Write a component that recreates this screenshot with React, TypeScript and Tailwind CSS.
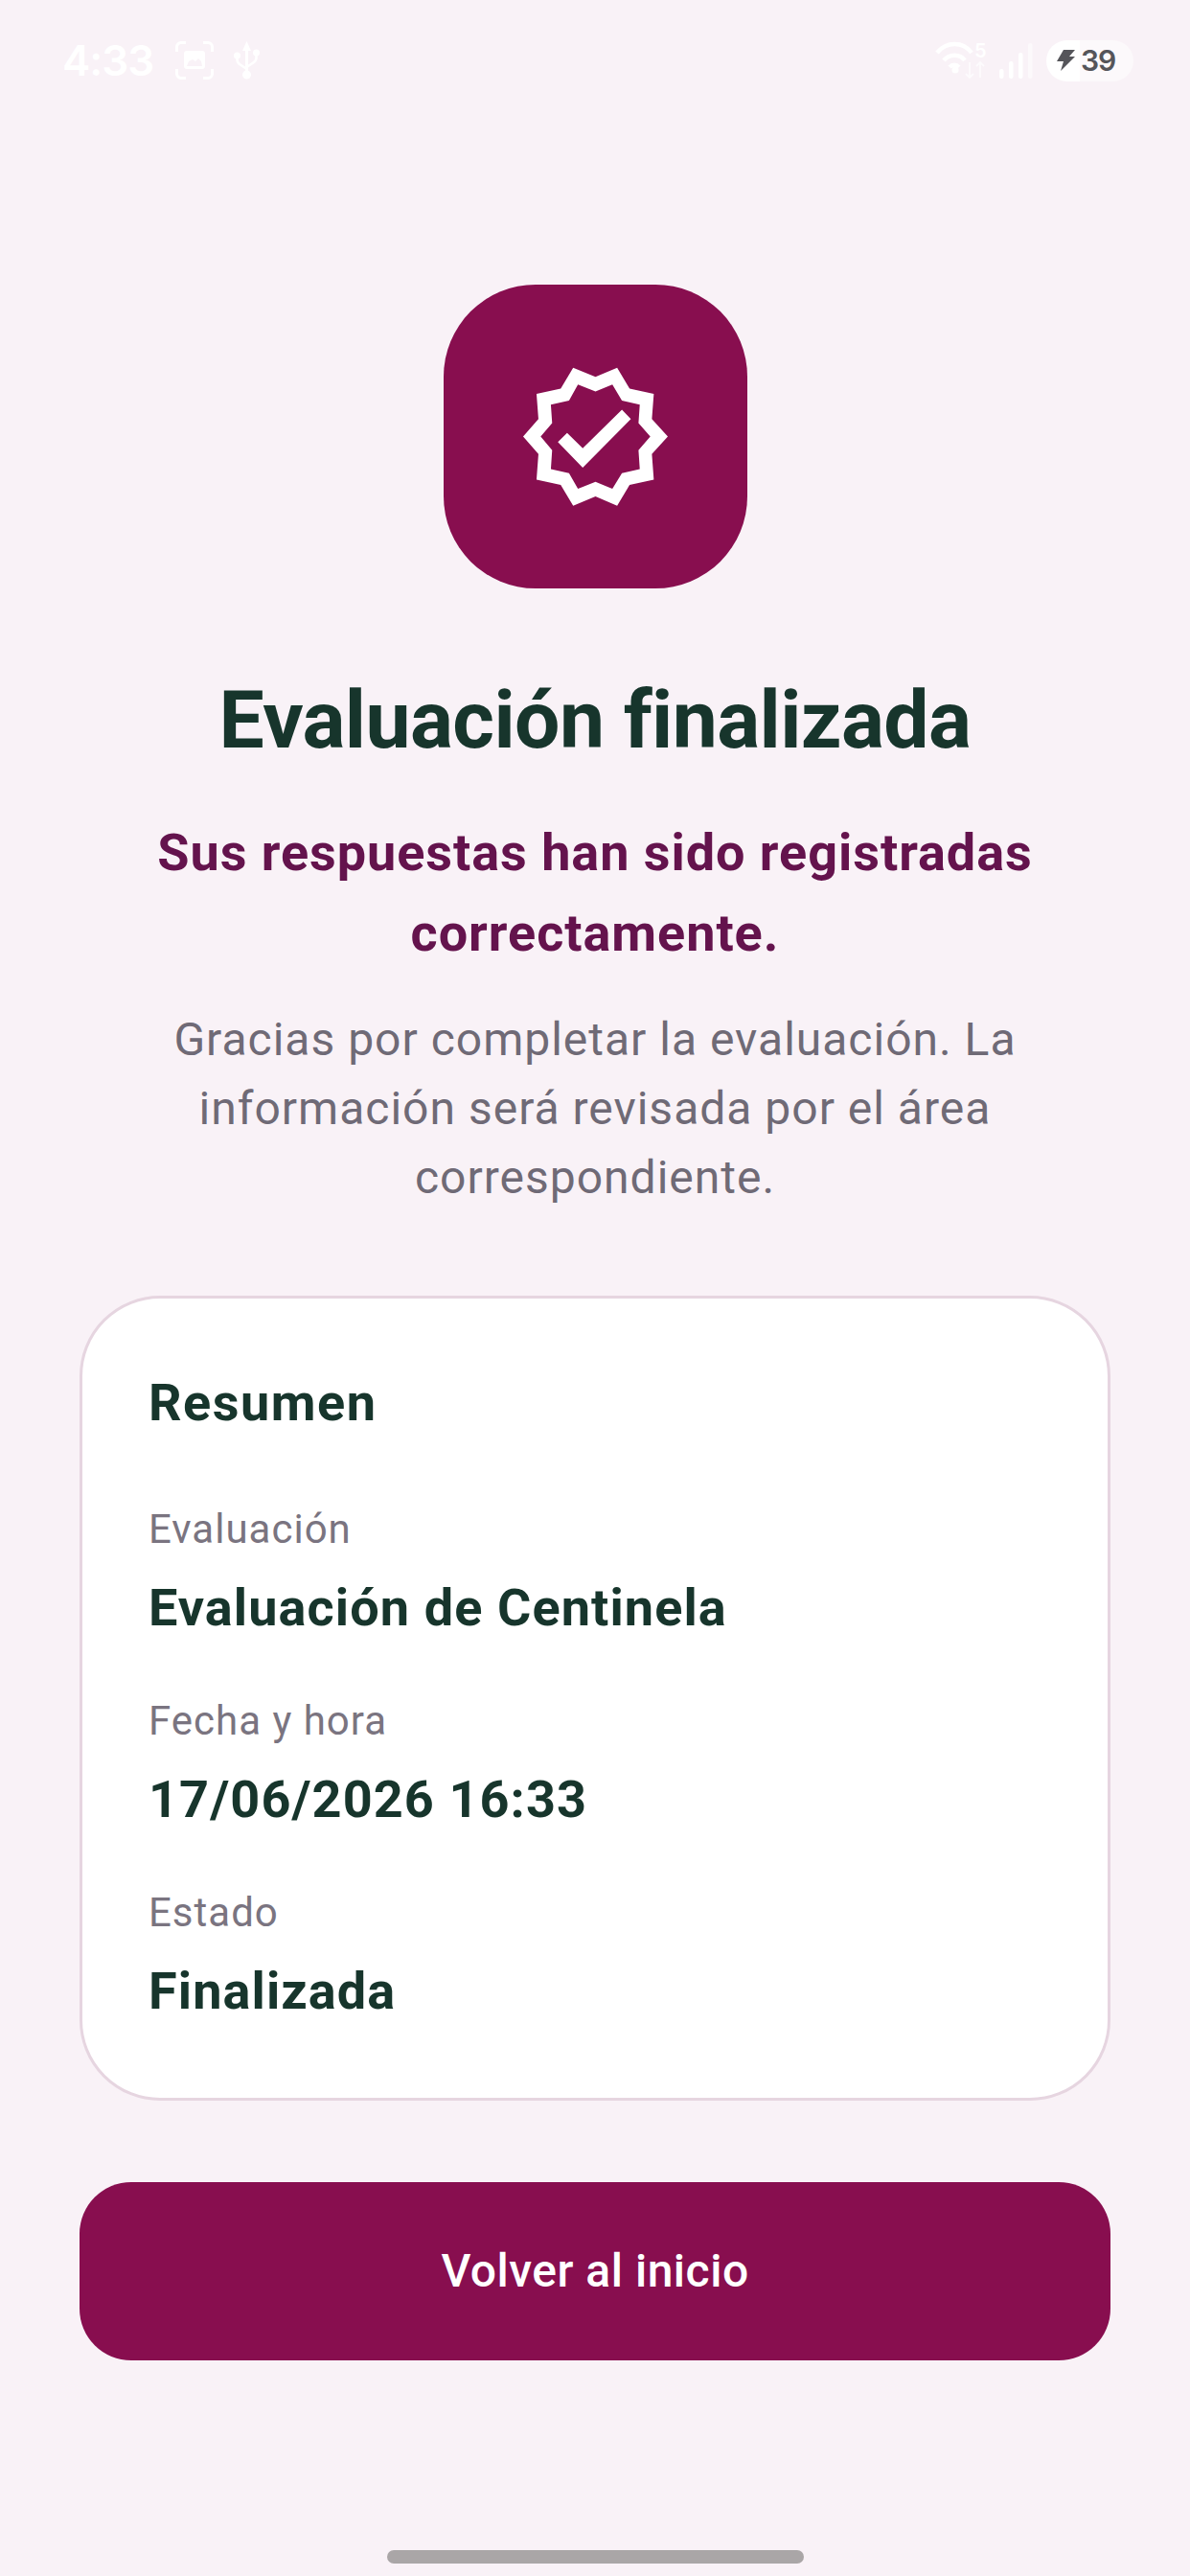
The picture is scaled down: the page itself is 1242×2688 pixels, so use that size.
const font = { fontFamily: "Roboto, sans-serif" };

const StatusBar = () => {
  return (
    <div className="flex h-[86px] items-center justify-between pl-[65px] pr-[59px] pt-[40px]">
      <div className="flex items-center">
        <span className="font-['Inter',sans-serif] text-[44px] leading-[46px] font-semibold tracking-[-1px] text-white">4:33</span>
        <svg className="ml-[23px]" width="40" height="40" viewBox="0 0 40 40" fill="none">
          <path d="M1.5 11V6a4.5 4.5 0 0 1 4.5-4.5h5M29 1.5h5a4.5 4.5 0 0 1 4.5 4.5v5M38.5 29v5a4.5 4.5 0 0 1-4.5 4.5h-5M11 38.5H6A4.5 4.5 0 0 1 1.5 34v-5" stroke="#fff" strokeWidth="3" />
          <path fillRule="evenodd" d="M12 10h16a3 3 0 0 1 3 3v13a3 3 0 0 1-3 3H12a3 3 0 0 1-3-3V13a3 3 0 0 1 3-3Zm0 16h16l-1-5-3-3-3 3-3-2-4 2Z" fill="#fff" />
        </svg>
        <svg className="ml-[21px]" width="27" height="40" viewBox="0 0 27 40" fill="#fff">
          <path d="M13.500 0l4.500 10h-3v24h-3V10H9Z" />
          <circle cx="13.500" cy="35" r="4.500" />
          <circle cx="3.500" cy="15" r="3.500" />
          <circle cx="23.500" cy="12" r="3.500" />
          <path d="M3.500 16v3c0 3 1.500 4.500 4 6l6 4M23.500 13v4c0 3-1.500 4.500-4 6l-6 4" fill="none" stroke="#fff" strokeWidth="2.600" />
        </svg>
      </div>
      <div className="flex items-center">
        <div className="relative h-[40px] w-[53px]">
          <svg width="53" height="40" viewBox="0 0 53 40" fill="#fff">
            <path d="M2 12C12 0 29 0 38 12M9 20c6-7 17-7 22 0M15 27c3-3 7-3 10 0" fill="none" stroke="#fff" strokeWidth="4.500" />
            <circle cx="21" cy="30" r="3.500" />
            <path d="M36 22v16M32 34l4 4 4-4M47 38V22M43 26l4-4 4 4" fill="none" stroke="#fff" strokeWidth="1.800" opacity="0.7" />
          </svg>
          <span className="absolute top-[0px] left-[41px] font-['Inter',sans-serif] text-[20px] leading-[20px] font-semibold text-white">5</span>
        </div>
        <svg className="ml-[14px]" width="35" height="38" viewBox="0 0 35 38" fill="#fff">
          <rect x="0" y="28" width="4.500" height="10" rx="2" />
          <rect x="10" y="20" width="4.500" height="18" rx="2" />
          <rect x="20" y="11" width="4.500" height="27" rx="2" />
          <rect x="30" y="1" width="4.500" height="37" rx="2" opacity="0.5" />
        </svg>
        <div className="ml-[14px] flex h-[43px] w-[91px] items-center rounded-full bg-[linear-gradient(90deg,#fff_39%,#fcf9fb_39%)] pl-[11px]">
          <svg width="19" height="22" viewBox="0 0 19 22" fill="#55555a">
            <path d="M7 0h12l-6 7h6L4 22l3-10H0Z" />
          </svg>
          <span className="ml-[6px] font-['Inter',sans-serif] text-[30px] leading-[34px] font-semibold tracking-[-1px] text-[#55555a]">39</span>
        </div>
      </div>
    </div>
  );
};

const BadgeIcon = () => {
  return (
    <svg width="163" height="153" viewBox="300 300 490 460" fill="#fff">
      <path
        fillRule="evenodd"
        d="M545 343L613 314L652 380L728 396L722 475L772 530L722 585L728 665L652 682L613 747L545 718L475 747L436 682L360 665L366 585L318 530L366 475L360 396L436 380L475 314ZM545 389L490 367L462 417L405 430L409 488L373 530L409 573L405 632L462 645L490 694L545 672L598 694L628 645L684 632L680 573L717 530L680 488L684 430L628 417L598 367Z"
      />
      <path d="M427 547L456 519L505 567L628 446L656 475L505 628Z" />
    </svg>
  );
};

const SummaryItem = ({ label, value }: { label: string; value: string }) => {
  return (
    <div className="flex flex-col">
      <span className="text-[42px] leading-[56px] tracking-[1px] text-[#7a7480]">{label}</span>
      <span className="mt-[18px] text-[54px] leading-[72px] font-bold tracking-[1.100px] text-[#17352c]">{value}</span>
    </div>
  );
};

const App = () => {
  return (
    <div style={font} className="relative flex h-[2688px] w-[1242px] flex-col bg-[#f9f2f7]">
      <StatusBar />
      <main className="flex flex-col items-center px-[83px] pt-[211px]">
        <div className="flex h-[317px] w-[317px] items-center justify-center rounded-[96px] bg-[#880e4f]">
          <BadgeIcon />
        </div>
        <h1 className="mt-[84px] text-[84px] leading-[108px] font-bold tracking-[-0.600px] text-[#17352c]">Evaluación finalizada</h1>
        <p className="mt-[42px] text-center text-[54px] leading-[84px] font-bold tracking-[0.950px] text-[#64134d]">
          Sus respuestas han sido registradas
          <br />
          correctamente.
        </p>
        <p className="mt-[33px] text-center text-[48px] leading-[72px] tracking-[1px] text-[#6f6a76]">
          Gracias por completar la evaluación. La
          <br />
          información será revisada por el área
          <br />
          correspondiente.
        </p>
        <section className="mt-[87px] flex w-full flex-col gap-[54px] rounded-[84px] border-[3px] border-[#e6d5e0] bg-white px-[69px] pt-[73px] pb-[75px]">
          <h2 className="mb-[14px] text-[54px] leading-[72px] font-bold tracking-[1.500px] text-[#17352c]">Resumen</h2>
          <SummaryItem label="Evaluación" value="Evaluación de Centinela" />
          <SummaryItem label="Fecha y hora" value="17/06/2026 16:33" />
          <SummaryItem label="Estado" value="Finalizada" />
        </section>
        <button className="mt-[85px] h-[186px] w-full rounded-[54px] bg-[#880e4f] text-[48px] font-medium tracking-[0.500px] text-white">
          Volver al inicio
        </button>
      </main>
      <div className="absolute bottom-[13px] left-[404px] h-[14px] w-[435px] rounded-full bg-[#aaa6a7]" />
    </div>
  );
};

export default App;
